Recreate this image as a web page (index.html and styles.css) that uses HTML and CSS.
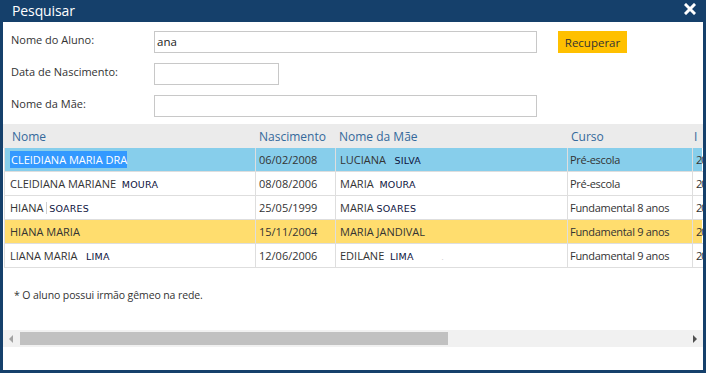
FILE: index.html
```html
<!DOCTYPE html>
<html lang="pt">
<head>
<meta charset="utf-8">
<title>Pesquisar</title>
<link rel="stylesheet" href="styles.css">
</head>
<body>
<div class="dialog">
  <div class="titlebar">
    <span class="title">Pesquisar</span>
    <svg class="close" width="12" height="12" viewBox="0 0 12 12"><path d="M2 2 L10 10 M10 2 L2 10" stroke="#fff" stroke-width="3" stroke-linecap="square"/></svg>
  </div>
  <div class="content">
    <div class="form">
      <div class="frow">
        <label class="flabel">Nome do Aluno:</label>
        <div class="finput wide">ana</div>
        <button class="btn">Recuperar</button>
      </div>
      <div class="frow">
        <label class="flabel">Data de Nascimento:</label>
        <div class="finput short"></div>
      </div>
      <div class="frow">
        <label class="flabel">Nome da Mãe:</label>
        <div class="finput wide"></div>
      </div>
    </div>

    <div class="grid">
      <div class="ghead">
        <div class="hc c1">Nome</div>
        <div class="hc c2">Nascimento</div>
        <div class="hc c3">Nome da Mãe</div>
        <div class="hc c4">Curso</div>
        <div class="hc c5">I</div>
      </div>
      <div class="grow sel">
        <div class="dc c1"><span class="hl">CLEIDIANA MARIA DRA</span></div>
        <div class="dc c2">06/02/2008</div>
        <div class="dc c3">LUCIANA &nbsp;&nbsp;<span class="alt">SILVA</span></div>
        <div class="dc c4">Pré-escola</div>
        <div class="dc c5">20</div>
      </div>
      <div class="grow">
        <div class="dc c1">CLEIDIANA MARIANE &nbsp;<span class="alt">MOURA</span></div>
        <div class="dc c2">08/08/2006</div>
        <div class="dc c3">MARIA &nbsp;<span class="alt">MOURA</span></div>
        <div class="dc c4">Pré-escola</div>
        <div class="dc c5">20</div>
      </div>
      <div class="grow">
        <div class="dc c1">HIANA <span class="bar"></span><span class="alt">SOARES</span></div>
        <div class="dc c2">25/05/1999</div>
        <div class="dc c3">MARIA <span class="alt">SOARES</span></div>
        <div class="dc c4">Fundamental 8 anos</div>
        <div class="dc c5">20</div>
      </div>
      <div class="grow twin">
        <div class="dc c1">HIANA MARIA</div>
        <div class="dc c2">15/11/2004</div>
        <div class="dc c3">MARIA JANDIVAL</div>
        <div class="dc c4">Fundamental 9 anos</div>
        <div class="dc c5">20</div>
      </div>
      <div class="grow">
        <div class="dc c1">LIANA MARIA &nbsp;&nbsp;<span class="alt">LIMA</span></div>
        <div class="dc c2">12/06/2006</div>
        <div class="dc c3">EDILANE &nbsp;<span class="alt">LIMA</span><span class="dot">.</span></div>
        <div class="dc c4">Fundamental 9 anos</div>
        <div class="dc c5">20</div>
      </div>
    </div>

    <p class="note">* O aluno possui irmão gêmeo na rede.</p>

    <div class="hscroll">
      <span class="arrow left"></span>
      <div class="track"><div class="thumb"></div></div>
      <span class="arrow right"></span>
    </div>
  </div>
</div>
</body>
</html>
```

FILE: styles.css
```css
* { box-sizing: border-box; }
html, body { margin: 0; padding: 0; background: #fff; }
body {
  width: 708px;
  height: 376px;
  overflow: hidden;
  font-family: "Open Sans", "Noto Sans", sans-serif;
  font-size: 11px;
  color: #333;
}
.dialog {
  width: 706px;
  height: 373px;
  background: #15406b;
  padding: 0 3px 3px 3px;
  display: flex;
  flex-direction: column;
}
.titlebar {
  height: 22px;
  display: flex;
  align-items: center;
  justify-content: space-between;
  padding: 0 7px 1px 9px;
  color: #fff;
}
.title {
  font-size: 14px;
  font-weight: 500;
  letter-spacing: -0.1px;
}
.close { display: block; margin-top: -3px; }
.content {
  flex: 1;
  background: #fff;
  display: flex;
  flex-direction: column;
  overflow: hidden;
}
.form {
  padding: 9px 0 0 8px;
  display: flex;
  flex-direction: column;
  gap: 10px;
}
.frow {
  display: flex;
  align-items: flex-start;
  height: 22px;
}
.flabel {
  width: 143px;
  line-height: 16px;
  padding-top: 1px;
  color: #333;
}
.finput {
  height: 22px;
  border: 1px solid #c8c8c8;
  padding: 0 2px;
  line-height: 20px;
  font-size: 11.5px;
  color: #222;
}
.finput.wide { width: 383px; }
.finput.short { width: 125px; }
.btn {
  margin-left: 21px;
  width: 69px;
  height: 22px;
  border: 0;
  padding: 0;
  background: #ffc000;
  color: #333;
  font-family: "Open Sans", "Noto Sans", sans-serif;
  font-size: 11.5px;
}
.grid {
  margin-top: 7px;
  width: 700px;
  overflow: hidden;
}
.ghead, .grow {
  display: grid;
  grid-template-columns: 251px 80px 232px 125px 10px;
  width: 698px;
}
.ghead {
  width: 700px;
  height: 24px;
  background: #ebebeb;
  color: #34699b;
  font-size: 12px;
  align-items: center;
}
.hc { padding-left: 5px; white-space: nowrap; overflow: hidden; }
.hc.c1 { padding-left: 9px; }
.hc.c5 { padding-left: 3px; }
.grow {
  height: 24px;
  margin-left: 1px;
  border-left: 1px solid #dcdcdc;
}
.grow.sel { background: #87ceeb; }
.grow.twin { background: #ffdd6e; }
.dc {
  border-right: 1px solid #dedede;
  border-bottom: 1px solid #dedede;
  padding-left: 4px;
  line-height: 23px;
  white-space: nowrap;
  overflow: hidden;
}
.dc.c1 { padding-left: 5px; }
.dc.c2 { padding-left: 3px; }
.dc.c4 { padding-left: 2px; letter-spacing: -0.3px; }
.dc.c5 { padding-left: 3px; border-right: 0; letter-spacing: -1px; }
.hl {
  background: #3399ff;
  color: #fff;
  padding: 1px 0 1px 1px;
}
.alt {
  font-family: "DejaVu Sans", Verdana, sans-serif;
  font-size: 9.5px;
  color: #0d1340;
  letter-spacing: 0.2px;
}
.bar {
  display: inline-block;
  width: 1px;
  height: 12px;
  background: #d0d0d0;
  vertical-align: -2px;
  margin-right: 2px;
}
.dot { color: #c8c8c8; margin-left: 28px; font-size: 8px; }
.note {
  margin: 19px 0 0 11px;
  line-height: 16px;
  font-size: 10.5px;
  letter-spacing: -0.1px;
  color: #333;
}
.hscroll {
  margin-top: 27px;
  height: 17px;
  background: #f1f1f1;
  display: flex;
  align-items: center;
}
.arrow {
  width: 0;
  height: 0;
  border-top: 4px solid transparent;
  border-bottom: 4px solid transparent;
}
.arrow.left {
  margin-left: 6px;
  border-right: 4px solid #a3a3a3;
}
.arrow.right {
  margin-right: 6px;
  border-left: 4px solid #505050;
}
.track {
  flex: 1;
  height: 13px;
  margin: 0 3px 0 7px;
}
.thumb {
  width: 428px;
  height: 13px;
  background: #c1c1c1;
}
```
